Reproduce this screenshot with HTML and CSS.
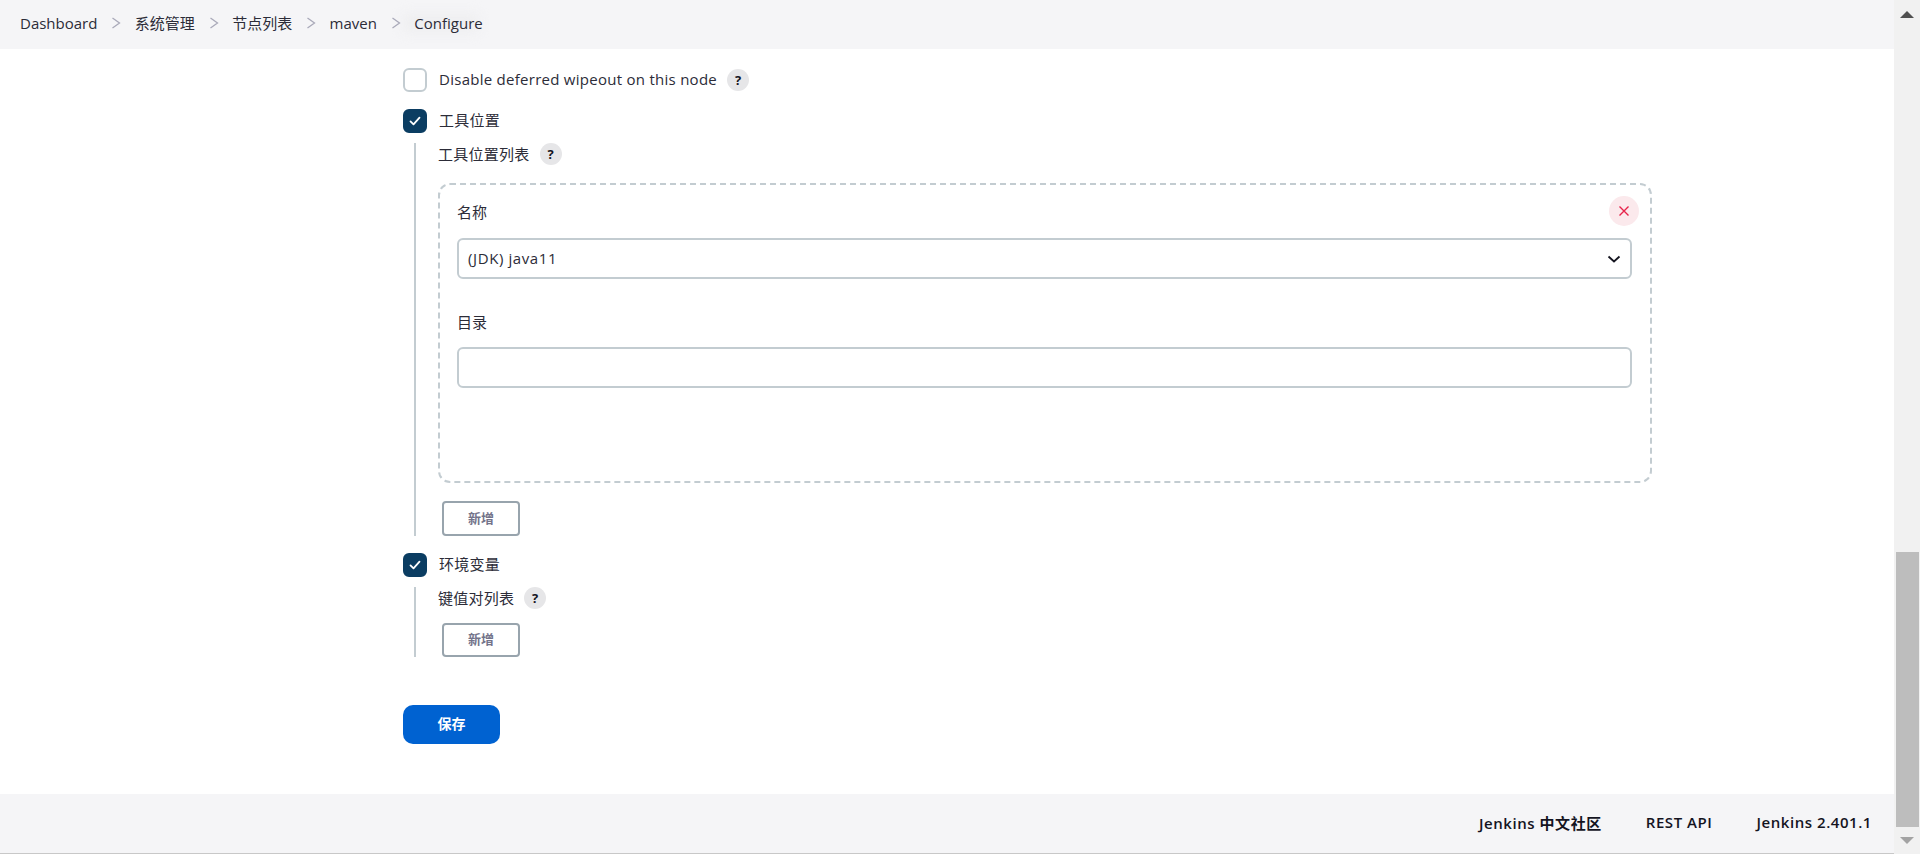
FILE: index.html
```html
<!DOCTYPE html>
<html lang="zh-CN">
<head>
<meta charset="utf-8">
<title>maven Configure [Jenkins]</title>
<link rel="stylesheet" href="styles.css">
</head>
<body>
<div class="window">
  <div class="page">
    <header class="topbar">
      <div class="ghost"></div>
      <nav class="crumbs">
        <a class="crumb">Dashboard</a>
        <svg class="sep" viewBox="0 0 12 12"><path d="M2.500 1 9.500 6l-7 5"/></svg>
        <a class="crumb">系统管理</a>
        <svg class="sep" viewBox="0 0 12 12"><path d="M2.500 1 9.500 6l-7 5"/></svg>
        <a class="crumb">节点列表</a>
        <svg class="sep" viewBox="0 0 12 12"><path d="M2.500 1 9.500 6l-7 5"/></svg>
        <a class="crumb">maven</a>
        <svg class="sep" viewBox="0 0 12 12"><path d="M2.500 1 9.500 6l-7 5"/></svg>
        <a class="crumb">Configure</a>
      </nav>
    </header>
    <main class="content">
      <form class="form">
        <div class="check-row first">
          <span class="box"></span>
          <span class="check-label">Disable deferred wipeout on this node</span>
          <span class="help">?</span>
        </div>
        <div class="check-row">
          <span class="box on"><svg viewBox="0 0 24 24"><path d="M6 12.500l4 4 8-9"/></svg></span>
          <span class="check-label">工具位置</span>
        </div>
        <div class="nested tools">
          <div class="list-label"><span>工具位置列表</span><span class="help">?</span></div>
          <div class="repeat">
            <button type="button" class="remove"><svg viewBox="0 0 12 12"><path d="M1.500 1.500l9 9M10.500 1.500l-9 9"/></svg></button>
            <div class="field-label">名称</div>
            <div class="select">
              <span>(JDK) java11</span>
              <svg viewBox="0 0 14 8"><path d="M1.500 1.500 7 6.500l5.500-5"/></svg>
            </div>
            <div class="field-label second">目录</div>
            <div class="input"></div>
          </div>
          <button type="button" class="add">新增</button>
        </div>
        <div class="check-row env">
          <span class="box on"><svg viewBox="0 0 24 24"><path d="M6 12.500l4 4 8-9"/></svg></span>
          <span class="check-label">环境变量</span>
        </div>
        <div class="nested vars">
          <div class="list-label"><span>键值对列表</span><span class="help">?</span></div>
          <button type="button" class="add">新增</button>
        </div>
        <button type="button" class="save">保存</button>
      </form>
    </main>
    <footer class="footer">
      <a>Jenkins 中文社区</a>
      <a>REST API</a>
      <a>Jenkins 2.401.1</a>
    </footer>
  </div>
  <aside class="scrollbar">
    <div class="arrow up"></div>
    <div class="track"><div class="thumb"></div></div>
    <div class="arrow down"></div>
  </aside>
</div>
</body>
</html>
```
FILE: styles.css
```css
* { box-sizing: border-box; }
html, body { margin: 0; height: 854px; overflow: hidden; background: #fff; }
body { font-family: "Open Sans", "Noto Sans CJK SC", sans-serif; font-size: 15px; color: #14141f; }
.window { display: flex; height: 854px; }
.page { flex: 1; min-width: 0; display: flex; flex-direction: column; }

.topbar { position: relative; height: 49px; flex: none; background: #f5f5f7; display: flex; align-items: center; padding: 0 0 3px 20px; overflow: hidden; }
.ghost { position: absolute; left: 403px; top: 14px; width: 75px; height: 18px; background: #eeeef0; filter: blur(6px); }
.crumbs { position: relative; display: flex; align-items: center; color: #2c2c38; }
.crumb { line-height: 20px; }
.sep { width: 12px; height: 12px; margin: 0 12.7px; fill: none; stroke: #a9a9b9; stroke-width: 1.3; }

.content { flex: 1; padding: 0 0 0 403px; }
.form { width: 1249px; display: flex; flex-direction: column; align-items: flex-start; }

.check-row { display: flex; align-items: center; height: 24px; }
.check-row.first { margin-top: 19px; }
.check-row + .check-row { margin-top: 17px; }
.check-row.env { margin-top: 17px; }
.box { width: 24px; height: 24px; border: 2px solid #c3ccd1; border-radius: 6px; background: #fff; margin-right: 12px; display: flex; align-items: center; justify-content: center; }
.box.on { background: #0b3d62; border-color: #0b3d62; }
.box svg { width: 18px; height: 18px; fill: none; stroke: #fff; stroke-width: 2.4; stroke-linecap: round; stroke-linejoin: round; }
.check-label { line-height: 20px; color: #2c2c38; letter-spacing: .27px; padding-bottom: 2px; }

.help { width: 22px; height: 22px; margin-left: 10px; border-radius: 50%; background: #e6e6e8; color: #14141f; font: 700 13px/22px "Open Sans", sans-serif; text-align: center; flex: none; }

.nested { margin-left: 11px; padding-left: 22px; border-left: 2px solid #c3ccd1; width: 100%; margin-top: 10px; }
.tools { height: 393px; }
.vars { height: 70px; }
.list-label { display: flex; align-items: center; height: 22px; color: #2c2c38; letter-spacing: .27px; }
.list-label > span:first-child { padding-bottom: 2px; }

.repeat { position: relative; margin-top: 18px; width: 1214px; height: 300px; border: 2px dashed #c3ccd1; border-radius: 12px; padding: 17px 18px 0 17px; }
.remove { position: absolute; top: 11px; right: 11px; width: 30px; height: 30px; padding: 0; border: 0; border-radius: 50%; background: #fbe9ec; display: flex; align-items: center; justify-content: center; }
.remove svg { width: 12px; height: 12px; fill: none; stroke: #e6234a; stroke-width: 1.4; }
.field-label { line-height: 20px; color: #2c2c38; }
.field-label.second { margin-top: 33px; }
.select, .input { height: 41px; width: 100%; border: 2px solid #c3ccd1; border-radius: 6px; }
.select { margin-top: 16px; display: flex; align-items: center; justify-content: space-between; padding: 0 9px; color: #2c2c38; letter-spacing: .6px; }
.select span { padding-bottom: 2px; }
.input { margin-top: 15px; }
.select svg { width: 14px; height: 8px; fill: none; stroke: #14141f; stroke-width: 1.8; }

.add { display: block; margin: 18px 0 0 4px; width: 78px; height: 35px; padding: 0 0 2px; background: #fff; border: 2px solid #98a4ad; border-radius: 4px; color: #73738a; font: 700 13px/1 "Noto Sans CJK SC", sans-serif; }
.vars .add { margin-top: 14px; height: 34px; padding-bottom: 3px; }

.save { margin-top: 48px; width: 97px; height: 39px; padding: 0 0 3px; border: 0; border-radius: 10px; background: #0062d1; color: #fff; font: 700 14px/1 "Noto Sans CJK SC", sans-serif; }

.footer { height: 60px; flex: none; background: #f5f5f7; display: flex; justify-content: flex-end; align-items: center; gap: 44px; padding: 0 22px 3px 0; font-weight: 600; font-size: 15px; letter-spacing: .55px; color: #14141f; border-bottom: 1px solid #c8c8c8; }

.scrollbar { width: 26px; flex: none; background: #f1f1f1; display: flex; flex-direction: column; }
.arrow { flex: none; display: flex; align-items: center; justify-content: center; }
.arrow.up { height: 29px; }
.arrow.down { height: 27px; }
.arrow::before { content: ""; width: 0; height: 0; border-left: 7px solid transparent; border-right: 7px solid transparent; }
.arrow.up::before { border-bottom: 7px solid #505050; }
.arrow.down::before { border-top: 7px solid #a3a3a3; }
.track { flex: 1; display: flex; flex-direction: column; justify-content: flex-end; padding: 0 1px 0 2px; }
.thumb { height: 275px; background: #bdbdbd; }
```
